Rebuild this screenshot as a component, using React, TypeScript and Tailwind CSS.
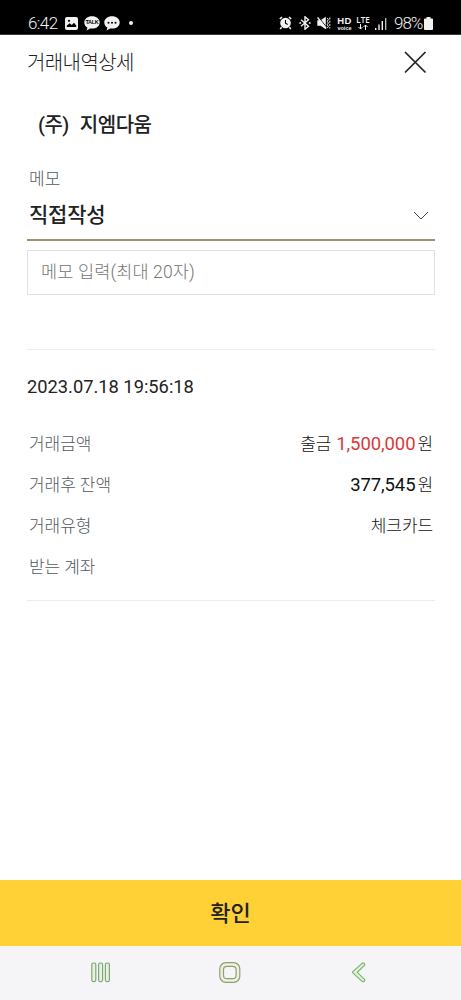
import clsx from "clsx";
import type { ReactNode } from "react";

type RowProps = {
  label: string;
  className?: string;
  children?: ReactNode;
};

const StatusBar = () => (
  <header className="flex h-[35px] items-start justify-between border-b border-[#3a3a3a] bg-black pl-7 pr-7 pt-[13px] text-[#f2f2f2]">
    <div className="flex h-5 items-center">
      <span className="w-[37px] whitespace-nowrap text-[17px] font-light leading-5 tracking-[-0.6px]">
        6:42
      </span>
      <svg width="13" height="13" viewBox="0 0 13 13">
        <rect width="13" height="13" rx="2" fill="currentColor" />
        <path d="M1.8 10V8.600L4.700 6.300l2 1.600 2.300-2.200 2.200 2.800V10Z" fill="black" />
        <circle cx="4" cy="3.800" r="1.100" fill="black" />
      </svg>
      <span className="relative ml-1.5 h-[15px] w-4">
        <svg width="16" height="15" viewBox="0 0 16 15">
          <path
            d="M8 .3C3.600.3.300 2.900.300 6.400c0 2.200 1.200 4 3.100 5.100l-.8 3.100 3.500-2.200q.9.200 1.900.2c4.400 0 7.700-2.700 7.700-6.200S12.400.3 8 .3Z"
            fill="currentColor"
          />
        </svg>
        <span className="absolute inset-x-0 top-[3px] text-center font-['Liberation_Sans'] text-[5.500px] font-bold leading-[7px] tracking-[-0.300px] text-black">
          TALK
        </span>
      </span>
      <svg className="ml-1" width="16" height="15" viewBox="0 0 16 15">
        <path
          d="M8 .3C3.600.3.300 2.900.300 6.400c0 2.200 1.200 4 3.100 5.100l-.8 3.100 3.500-2.200q.9.200 1.900.2c4.400 0 7.700-2.700 7.700-6.200S12.400.3 8 .3Z"
          fill="currentColor"
        />
        <circle cx="4.500" cy="6.800" r="1" fill="black" />
        <circle cx="8" cy="6.800" r="1" fill="black" />
        <circle cx="11.500" cy="6.800" r="1" fill="black" />
      </svg>
      <i className="ml-[9px] size-1 rounded-full bg-[#f2f2f2]" />
    </div>
    <div className="flex h-5 items-center">
      <svg width="13" height="14" viewBox="0 0 13 14">
        <circle cx="6.500" cy="7" r="5.300" fill="currentColor" />
        <path
          d="M.8 3 3 1M12.200 3 10 1M2.600 11.300 1.200 13M10.400 11.300l1.400 1.700"
          stroke="currentColor"
          strokeWidth="1.600"
        />
        <path d="M6.500 4v3.200l2.200 1.200" fill="none" stroke="black" strokeWidth="1.100" />
      </svg>
      <svg
        className="ml-[7px]"
        width="12"
        height="14"
        viewBox="0 0 12 14"
        fill="none"
        stroke="currentColor"
        strokeWidth="1.400"
      >
        <path d="m2 3.700 7.500 6.500L6 13.200V.8l3.500 3L2 10.300" />
        <path d="M.3 7h1.800M9.800 7h1.800" strokeWidth="1.700" />
      </svg>
      <svg
        className="ml-[6px]"
        width="14"
        height="14"
        viewBox="0 0 14 14"
        fill="none"
        stroke="currentColor"
      >
        <path d="M.3 4.300h3.300L8.800.8v12.400L3.600 9.700H.3Z" fill="currentColor" stroke="none" />
        <path d="M1.500 1.200 9.800 11.500" stroke="black" strokeWidth="1" />
        <path d="m.6 1.500 8.600 11" strokeWidth="1.300" />
        <path d="m10.300 2 1 1.500-1 1.800 1 1.700-1 1.700 1 1.800-1 1.500" />
        <path d="M12.800 1.500v11" strokeDasharray="2 1.200" />
      </svg>
      <div className="ml-[6px] flex w-[15px] flex-col items-center font-['Liberation_Sans'] font-bold">
        <span className="text-[9.500px] leading-[9px] tracking-[0.300px]">HD</span>
        <span className="text-[5.500px] leading-[6px]">voice</span>
      </div>
      <div className="ml-[4px] flex w-[14px] flex-col items-center font-['Open_Sans'] text-[8px] font-semibold leading-[8px]">
        LTE
        <svg width="10" height="6" viewBox="0 0 10 6" fill="none" stroke="currentColor">
          <path d="M2.500 0v5M.5 3l2 2 2-2M7.500 6V1M5.500 3l2-2 2 2" />
        </svg>
      </div>
      <svg className="ml-[5px]" width="12" height="13" viewBox="0 0 12 13" fill="currentColor">
        <path d="M0 11h1.400v2H0zM3.300 7.500h1.400V13H3.300zM6.600 4H8v9H6.600z" />
        <path d="M10 1h1.400v12H10z" opacity=".75" />
      </svg>
      <span className="ml-[7px] w-[30px] whitespace-nowrap text-[17px] font-light leading-5 tracking-[-1px]">
        98%
      </span>
      <svg width="9" height="13" viewBox="0 0 9 13">
        <path
          d="M2.500 0h4v1.500H8q1 0 1 1V12q0 1-1 1H1q-1 0-1-1V2.500q0-1 1-1h1.500Z"
          fill="currentColor"
        />
      </svg>
    </div>
  </header>
);

const DetailRow = ({ label, className, children }: RowProps) => (
  <div className={clsx("flex items-center justify-between pl-0.5 pr-0.5", className)}>
    <dt className="text-[17px] tracking-[-0.050px] text-[#55585d]">{label}</dt>
    <dd className="flex items-center text-[17px] tracking-[-0.100px] text-[#111]">
      {children}
    </dd>
  </div>
);

const NavBar = () => (
  <nav className="flex h-[54px] items-start bg-[#f5f5f8] pl-[91px] pt-4">
    <svg width="20" height="21" viewBox="0 0 20 21" fill="#e6f2df" stroke="#7fa778" strokeWidth="1.200">
      <rect x=".8" y="1" width="4" height="18.600" rx="1.500" />
      <rect x="7.600" y="1" width="4" height="18.600" rx="1.500" />
      <rect x="14.400" y="1" width="4" height="18.600" rx="1.500" />
    </svg>
    <svg className="ml-[108px]" width="22" height="21" viewBox="0 0 22 21" stroke="#90a075" strokeWidth="1.200">
      <rect x=".8" y=".7" width="20" height="19.600" rx="6" fill="#eef1df" />
      <rect x="4.500" y="4.300" width="12.600" height="12.400" rx="3.500" fill="#f5f5f8" />
    </svg>
    <svg className="ml-[111px]" width="14" height="21" viewBox="0 0 14 21" fill="#def0d8" stroke="#76b36a" strokeWidth="1.100">
      <path d="M10.300 1.200.8 9.700q-.5.600 0 1.200l9.500 8.700q.8.600 1.600 0l.6-.6q.6-.8 0-1.600L5.300 10.300l7.200-6.900q.6-.8 0-1.600l-.6-.6q-.8-.6-1.600 0Z" />
    </svg>
  </nav>
);

const App = () => {
  return (
    <div className="flex h-[1000px] w-[461px] flex-col overflow-hidden bg-white font-[Roboto,'Noto_Sans_CJK_KR',sans-serif] text-[#222]">
      <StatusBar />
      <div className="flex h-[53px] items-center justify-between pl-[27px] pr-[34px]">
        <h1 className="whitespace-nowrap pt-0.5 text-[20px] font-light tracking-[-0.600px]">
          거래내역상세
        </h1>
        <svg width="24" height="24" viewBox="0 0 24 24" stroke="#222" strokeWidth="1.700">
          <path d="m2 2 20.500 20.500M22.500 2 2 22.500" />
        </svg>
      </div>

      <main className="flex flex-1 flex-col px-[27px] pr-[26px]">
        <h2 className="mt-[19px] flex h-9 items-center gap-[11px] pl-[11px] text-[20px] font-medium tracking-[-0.500px]">
          <span>(주)</span>
          <span>지엠다움</span>
        </h2>
        <section className="mt-6">
          <p className="h-6 pl-0.5 text-[17px] font-light leading-6 text-[#55585d]">메모</p>
          <button
            type="button"
            className="flex h-[50px] w-full items-center justify-between border-b-2 border-[#a3906d] pl-0.5 pr-1.5 pt-0.5 text-[21px] font-medium tracking-[-0.200px]"
          >
            직접작성
            <svg width="16" height="10" viewBox="0 0 16 10" fill="none" stroke="#444">
              <path d="m1 1 7 7 7-7" />
            </svg>
          </button>
          <input
            type="text"
            placeholder="메모 입력(최대 20자)"
            className="mt-[9px] block h-[45px] w-full border border-[#dfe2e4] px-[13px] pb-0.5 text-[17.500px] font-light tracking-[0.150px] placeholder:text-[#757575]"
          />
        </section>

        <section className="mt-[54px] h-[252px] border-y border-[#ececec] font-light">
          <time className="mt-[25px] block h-6 whitespace-nowrap text-[18.300px] font-normal leading-6">
            2023.07.18 19:56:18
          </time>
          <dl className="mt-[24px] leading-6">
            <DetailRow label="거래금액" className="h-[41px]">
              출금
              <span className="ml-[5px] text-[18.500px] font-normal text-[#d93a3a]">1,500,000</span>
              <span className="ml-[2px]">원</span>
            </DetailRow>
            <DetailRow label="거래후 잔액" className="h-[42px]">
              <span className="text-[18.500px] font-normal">377,545</span>
              <span className="ml-[2px]">원</span>
            </DetailRow>
            <DetailRow label="거래유형" className="h-10">
              체크카드
            </DetailRow>
            <DetailRow label="받는 계좌" className="h-[41px]" />
          </dl>
        </section>
      </main>

      <button
        type="button"
        className="h-[66px] bg-[#ffd137] pt-px text-[22px] font-medium leading-[66px] text-[#222]"
      >
        확인
      </button>
      <NavBar />
    </div>
  );
};

export default App;
